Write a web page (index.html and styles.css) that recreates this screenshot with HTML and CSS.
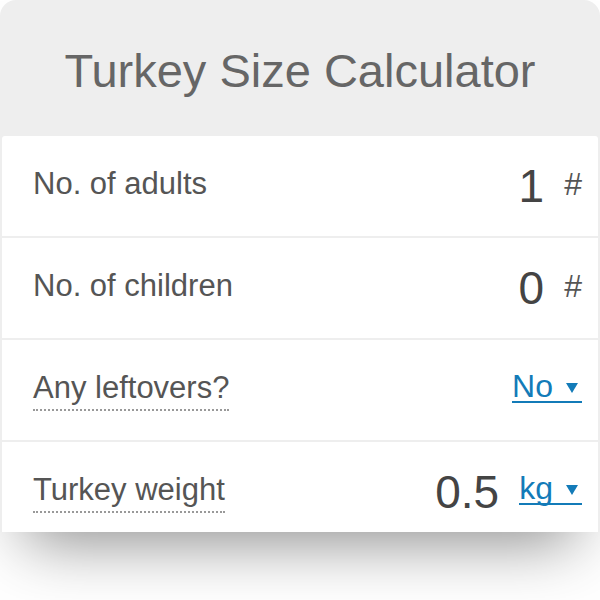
FILE: index.html
```html
<!DOCTYPE html>
<html lang="en">
<head>
    <meta charset="UTF-8">
    <meta name="viewport" content="width=device-width, initial-scale=1.0">
    <title>Turkey Size Calculator</title>
    <link rel="stylesheet" href="styles.css">
</head>
<body>

    <!-- calculator card -->
    <div class="calculator">
        <div class="calc-header">
            <h1 class="calc-title">Turkey Size Calculator</h1>
        </div>

        <div class="calc-body">
            <div class="row">
                <span class="label">No. of adults</span>
                <div class="field">
                    <span class="value">1</span>
                    <span class="unit">#</span>
                </div>
            </div>

            <div class="row">
                <span class="label">No. of children</span>
                <div class="field">
                    <span class="value">0</span>
                    <span class="unit">#</span>
                </div>
            </div>

            <div class="row">
                <span class="label hint">Any leftovers?</span>
                <div class="field">
                    <a class="select" href="#">No</a>
                </div>
            </div>

            <div class="row">
                <span class="label hint">Turkey weight</span>
                <div class="field">
                    <span class="value">0.5</span>
                    <a class="select" href="#">kg</a>
                </div>
            </div>
        </div>
    </div>

</body>
</html>
```

FILE: styles.css
```css
/* page */
body {
    font-family: "Liberation Sans", Arial, sans-serif;
    background-color: #ffffff;
    color: #555;
    margin: 0;
    padding: 0 0 68px;
    min-height: 600px;
    box-sizing: border-box;
}

/* calculator card */
.calculator {
    width: 600px;
    height: 532px;
    box-sizing: border-box;
    padding: 0 2px;
    background-color: #eeeeee;
    border-radius: 16px 16px 0 0;
    overflow: hidden;
    box-shadow: 0px 35px 60px -25px rgba(0, 0, 0, 0.45);
}

.calc-header {
    height: 136px;
    box-sizing: border-box;
    padding-top: 43px;
    text-align: center;
}

.calc-title {
    margin: 0;
    font-size: 47px;
    font-weight: normal;
    line-height: 56px;
    color: #666;
}

/* rows */
.calc-body {
    display: flex;
    flex-direction: column;
    gap: 2px;
}

.row {
    height: 100px;
    flex-shrink: 0;
    box-sizing: border-box;
    padding: 30px 16px 0 31px;
    display: flex;
    justify-content: space-between;
    align-items: flex-start;
    background: white;
}

.row:first-child {
    border-radius: 3px 3px 0 0;
}

.label {
    font-size: 31px;
    line-height: 36px;
    color: #555;
}

.label.hint {
    padding-bottom: 3px;
    border-bottom: 2px dotted #999;
}

.field {
    display: flex;
    align-items: flex-start;
    gap: 20px;
}

.value {
    font-size: 46px;
    line-height: 40px;
    color: #444;
}

.unit {
    font-size: 32px;
    line-height: 36px;
    color: #555;
}

/* unit dropdown */
.select {
    display: inline-flex;
    align-items: center;
    margin-top: 2px;
    padding-right: 4px;
    font-size: 32px;
    line-height: 29px;
    color: #137bb8;
    text-decoration: none;
    border-bottom: 2px solid #137bb8;
}

.select::after {
    content: "";
    margin: 3px 0 0 13px;
    border-left: 6.5px solid transparent;
    border-right: 6.5px solid transparent;
    border-top: 10px solid #137bb8;
}
```
